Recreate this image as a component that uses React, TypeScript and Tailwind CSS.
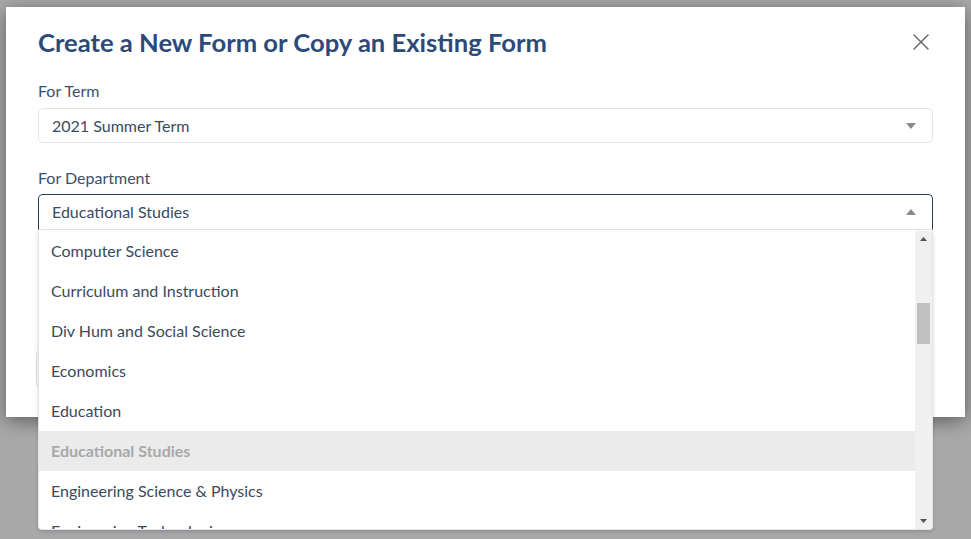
import { X } from "lucide-react";

const departments = [
  "Computer Science",
  "Curriculum and Instruction",
  "Div Hum and Social Science",
  "Economics",
  "Education",
  "Educational Studies",
  "Engineering Science & Physics",
  "Engineering Technologies",
];

const selected = "Educational Studies";

function Caret({ up }: { up?: boolean }) {
  return (
    <svg width="10" height="6" viewBox="0 0 10 6" className="fill-[#8a8a8a]">
      {up ? <polygon points="0,6 10,6 5,0" /> : <polygon points="0,0 10,0 5,6" />}
    </svg>
  );
}

export default function App() {
  return (
    <div className="w-[971px] h-[539px] bg-[#a9a9a9] overflow-hidden pt-[7px] px-[6px] font-['Lato',sans-serif]">
      {/* Modal */}
      <div className="relative h-[410px] bg-white shadow-[0_4px_18px_rgba(0,0,0,0.45)] px-[32px] pt-[19px]">
        <div className="flex items-center justify-between h-[32px]">
          <h1 className="text-[25.6px] leading-[32px] font-bold text-[#2c4a78]">
            Create a New Form or Copy an Existing Form
          </h1>
          <button className="w-[20px] h-[20px] mr-[2px] flex items-center justify-center text-[#707070]">
            <X size={28} strokeWidth={1.3} className="shrink-0" />
          </button>
        </div>

        <label className="block mt-[23px] text-[16px] leading-[20px] text-[#3b4f6e]">For Term</label>
        <div className="mt-[7px] h-[35px] border border-[#dde5ee] rounded-[5px] flex items-center justify-between pl-[13px] pr-[16px] text-[16px] text-[#3a4a5e]">
          <span>2021 Summer Term</span>
          <Caret />
        </div>

        <label className="block mt-[25px] text-[16px] leading-[20px] text-[#3b4f6e]">For Department</label>
        <div className="relative mt-[6px]">
          <div className="h-[36px] border border-[#2c3e57] border-b-[#dde5ee] rounded-t-[5px] flex items-center justify-between pl-[13px] pr-[16px] text-[16px] text-[#3a4a5e]">
            <span>{selected}</span>
            <Caret up />
          </div>

          {/* faint button behind the list */}
          <div className="absolute left-[-2px] top-[156px] w-[60px] h-[37px] border border-[#e4e4e4] rounded-[4px] bg-[#fafafa]" />

          {/* Dropdown list */}
          <div className="absolute left-0 right-0 top-[37px] h-[299px] bg-white border border-t-0 border-[#dde5ee] rounded-b-[4px] shadow-[0_2px_4px_rgba(0,0,0,0.15)] flex overflow-hidden z-10">
            <ul className="flex-1">
              {departments.map((d) => (
                <li
                  key={d}
                  className={
                    d === selected
                      ? "h-[40px] flex items-center pl-[12px] text-[16px] font-bold text-[#a8a8a8] bg-[#ebebeb]"
                      : "h-[40px] flex items-center pl-[12px] text-[16px] text-[#3a4a5e]"
                  }
                >
                  {d}
                </li>
              ))}
            </ul>
            <div className="w-[17px] bg-[#f0f0f0] flex flex-col items-center justify-between py-[6px]">
              <svg width="7" height="4" viewBox="0 0 7 4" className="fill-[#505050]">
                <polygon points="0,4 7,4 3.5,0" />
              </svg>
              <div className="flex-1 w-full flex flex-col items-center">
                <div className="mt-[62px] w-[13px] h-[41px] bg-[#c1c1c1]" />
              </div>
              <svg width="7" height="4" viewBox="0 0 7 4" className="fill-[#505050]">
                <polygon points="0,0 7,0 3.5,4" />
              </svg>
            </div>
          </div>
        </div>
      </div>
    </div>
  );
}
